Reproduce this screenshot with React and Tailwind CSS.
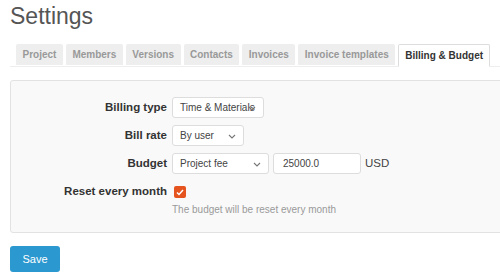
import React from 'react';

const tabs = ['Project', 'Members', 'Versions', 'Contacts', 'Invoices', 'Invoice templates', 'Billing & Budget'];

const Chevron = () => (
  <svg width="8" height="5" viewBox="0 0 8 5" className="absolute right-[7px] top-[8px]">
    <path d="M1 1l3 3 3-3" fill="none" stroke="#777" strokeWidth="1.1" />
  </svg>
);

const Select = ({ value, width }) => (
  <div className={`relative flex items-center h-[21px] ${width} bg-white border border-[#ddd] rounded-[3px] pl-[7px] text-[10px] text-[#444]`}>
    <span className="whitespace-nowrap">{value}</span>
    <Chevron />
  </div>
);

const Row = ({ label, children }) => (
  <div className="flex items-center h-[21px]">
    <div className="w-[161px] pr-[5px] text-right font-bold text-[11.5px] text-[#333]">{label}</div>
    {children}
  </div>
);

const App = () => {
  return (
    <div className="w-[500px] h-[280px] bg-white overflow-hidden font-['Liberation_Sans',Arial,sans-serif]">
      <h1 className="pl-[10px] pt-[2px] text-[23px] leading-[28px] text-[#555] font-normal">Settings</h1>
      <div className="mt-[14px] ml-[10px] flex items-end gap-[3px] pl-[6px] border-b border-[#eee] h-[23px]">
        {tabs.map((tab, i) =>
          i === tabs.length - 1 ? (
            <div key={tab} className="h-[23px] -mb-px px-[6px] flex items-center bg-white border border-[#ddd] border-b-white rounded-t-[2px] text-[10px] font-bold text-[#333] whitespace-nowrap">
              {tab}
            </div>
          ) : (
            <div key={tab} className="h-[21px] mb-px px-[6.5px] flex items-center bg-[#eee] rounded-t-[2px] text-[10px] font-bold text-[#999] whitespace-nowrap">
              {tab}
            </div>
          )
        )}
      </div>
      <div className="mt-[13px] ml-[10px] w-[500px] h-[153px] bg-[#f9f9f9] border border-[#e2e2e2] rounded-[3px] pt-[16px] flex flex-col gap-[7px]">
        <Row label="Billing type">
          <Select value="Time & Materials" width="w-[92px]" />
        </Row>
        <Row label="Bill rate">
          <Select value="By user" width="w-[72px]" />
        </Row>
        <Row label="Budget">
          <div className="flex items-center gap-[4px]">
            <Select value="Project fee" width="w-[97px]" />
            <div className="h-[21px] w-[88px] bg-white border border-[#ddd] rounded-[3px] pl-[9px] flex items-center text-[10px] text-[#444]">25000.0</div>
            <span className="text-[11.5px] text-[#444]">USD</span>
          </div>
        </Row>
        <div className="flex items-start mt-[2px]">
          <div className="w-[161px] pr-[5px] text-right font-bold text-[11.5px] leading-[16px] text-[#333]">Reset every month</div>
          <div className="flex flex-col">
            <div className="ml-[2px] mt-[3px] w-[12px] h-[12px] rounded-[2px] bg-[#e5531f] flex items-center justify-center">
              <svg width="8" height="7" viewBox="0 0 8 7">
                <path d="M1 3.5l2 2L7 1" fill="none" stroke="white" strokeWidth="1.5" />
              </svg>
            </div>
            <div className="mt-[4px] text-[10px] text-[#999]">The budget will be reset every month</div>
          </div>
        </div>
      </div>
      <button className="mt-[13px] ml-[10px] w-[50px] h-[26px] rounded-[3px] bg-[#2b98cf] text-white text-[11px]">Save</button>
    </div>
  );
};

export default App;
